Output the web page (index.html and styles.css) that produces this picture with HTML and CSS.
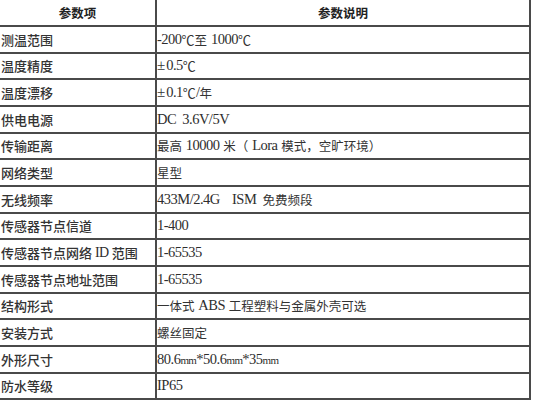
FILE: index.html
```html
<!DOCTYPE html>
<html lang="zh">
<head>
<meta charset="utf-8">
<link rel="stylesheet" href="styles.css">
</head>
<body>
<div class="table">
  <div class="row head"><div class="key">参数项</div><div class="val">参数说明</div></div>
  <div class="row"><div class="key">测温范围</div><div class="val"><span class="en">-200</span><span class="c">℃</span>至 <span class="en">1000</span><span class="c">℃</span></div></div>
  <div class="row"><div class="key">温度精度</div><div class="val"><span class="pm">±</span><span class="en">0.5</span><span class="c">℃</span></div></div>
  <div class="row"><div class="key">温度漂移</div><div class="val"><span class="pm">±</span><span class="en">0.1</span><span class="c">℃</span><span class="en">/</span>年</div></div>
  <div class="row"><div class="key">供电电源</div><div class="val"><span class="en">DC 3.6V/5V</span></div></div>
  <div class="row"><div class="key">传输距离</div><div class="val">最高 <span class="en">10000</span> 米（ <span class="en">Lora</span> 模式，空旷环境）</div></div>
  <div class="row"><div class="key">网络类型</div><div class="val">星型</div></div>
  <div class="row"><div class="key">无线频率</div><div class="val"><span class="en">433M/2.4G  ISM </span>免费频段</div></div>
  <div class="row"><div class="key">传感器节点信道</div><div class="val"><span class="en">1-400</span></div></div>
  <div class="row"><div class="key">传感器节点网络 <span class="en">ID</span> 范围</div><div class="val"><span class="en">1-65535</span></div></div>
  <div class="row"><div class="key">传感器节点地址范围</div><div class="val"><span class="en">1-65535</span></div></div>
  <div class="row"><div class="key">结构形式</div><div class="val">一体式 <span class="en">ABS</span> 工程塑料与金属外壳可选</div></div>
  <div class="row"><div class="key">安装方式</div><div class="val">螺丝固定</div></div>
  <div class="row"><div class="key">外形尺寸</div><div class="val"><span class="en">80.6<span class="mm">mm</span>*50.6<span class="mm">mm</span>*35<span class="mm">mm</span></span></div></div>
  <div class="row"><div class="key">防水等级</div><div class="val"><span class="en">IP65</span></div></div>
</div>
</body>
</html>
```
FILE: styles.css
```css
html, body {
  margin: 0;
  padding: 0;
  background: #ffffff;
}
.table {
  width: 529px;
  border-right: 2px solid #4a4a4a;
  border-bottom: 2px solid #4a4a4a;
  color: #2b2b2b;
}
.row {
  display: grid;
  grid-template-columns: 155px 1fr;
  height: 24.67px;
  border-top: 2px solid #4a4a4a;
}
.row.head {
  height: 25px;
  border-top: none;
}
.key, .val {
  display: flex;
  align-items: center;
  white-space: pre;
  overflow: hidden;
}
.key {
  padding-left: 1px;
  font-family: "Noto Sans CJK SC", sans-serif;
  font-size: 13px;
  font-weight: 500;
  color: #333;
}
.val {
  border-left: 2px solid #4a4a4a;
  padding-left: 0;
  font-family: "Noto Sans CJK SC", sans-serif;
  font-size: 12.5px;
  word-spacing: 1px;
  color: #333;
}
.en {
  font-family: "Liberation Serif", serif;
  font-size: 14.5px;
  letter-spacing: -0.5px;
  word-spacing: 3px;
  color: #2e2e2e;
}
.key .en {
  font-size: 14px;
}
.c {
  font-family: "Noto Sans CJK SC", sans-serif;
  font-variant-east-asian: full-width;
  font-size: 13px;
}
.mm {
  font-size: 11px;
  letter-spacing: -0.6px;
}
.pm {
  font-family: "Liberation Serif", serif;
  font-size: 15px;
  margin-right: 1px;
}
.head .key, .head .val {
  justify-content: center;
  font-family: "Noto Sans CJK SC", sans-serif;
  font-weight: 700;
  font-size: 12.5px;
  color: #222;
  padding-left: 0;
  word-spacing: 0;
}
```
